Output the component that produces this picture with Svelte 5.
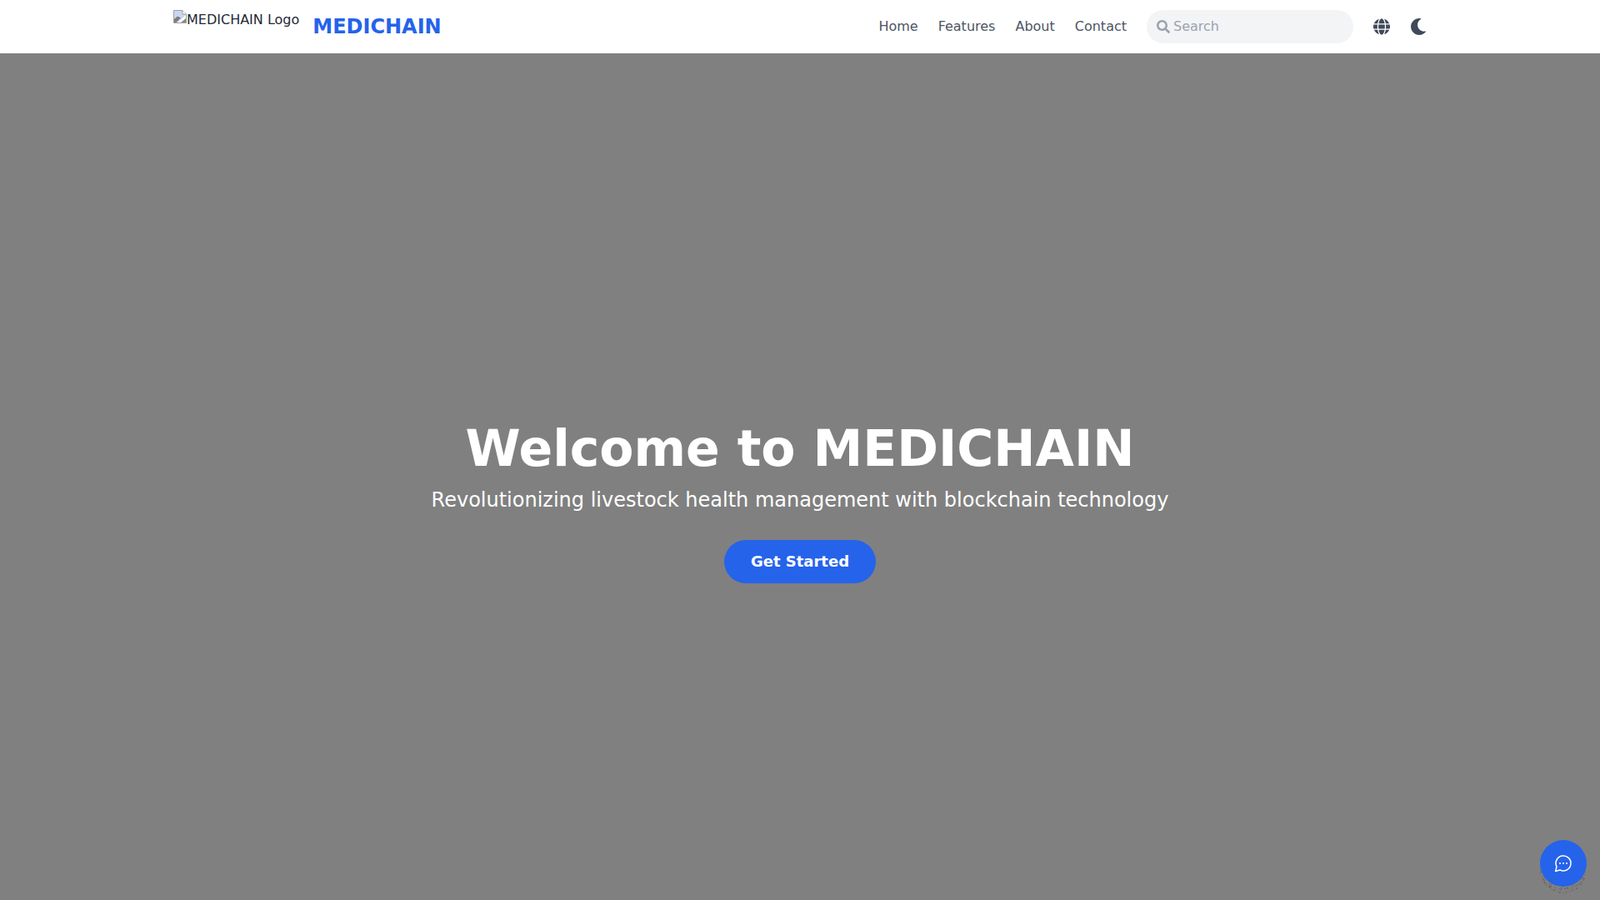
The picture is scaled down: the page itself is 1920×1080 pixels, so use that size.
<script>
  const links = ['Home', 'Features', 'About', 'Contact'];

  // scattered pixels of the chat button's shadow, the button itself hides the upper part
  const shadowDots = [];
  for (let y = 0; y < 36; y += 1) {
    for (let x = 0; x < 64; x += 1) {
      const noise = Math.abs(Math.sin(x * 12.9898 + y * 78.233) * 43758.5453) % 1;
      if (Math.hypot(x - 31, y - 4) < 28 && noise < 0.2) shadowDots.push({ x, y });
    }
  }
</script>

<div class="page">
  <header class="navbar">
    <div class="nav-inner">
      <a class="brand" href="#top">
        <span class="logo-alt">
          <svg class="broken" width="16" height="16" viewBox="0 0 16 16" aria-hidden="true">
            <path d="M0.5 0.5H11L15.5 5V15.5H0.5Z" fill="#c9d7f0" stroke="#a0a0a0" />
            <path d="M11 0.5V5H15.5" fill="#fff" stroke="#a0a0a0" />
            <path d="M1 15V11L5 7.5L9 9.5L3.5 15Z" fill="#7d7d7d" />
            <path d="M5 15L15 6V15Z" fill="#fff" />
            <path d="M9 15L15 10V15Z" fill="#8a8a8a" />
          </svg>MEDICHAIN Logo
        </span>
        <span class="brand-name">MEDICHAIN</span>
      </a>

      <nav class="nav-right">
        {#each links as link}
          <a class="nav-link" href="#top">{link}</a>
        {/each}
        <div class="search">
          <svg class="search-icon" width="16" height="16" viewBox="0 0 512 512" aria-hidden="true">
            <path fill="currentColor" d="M505 442.7L405.3 343c-4.5-4.5-10.6-7-17-7H372c27.6-35.3 44-79.7 44-128C416 93.1 322.9 0 208 0S0 93.1 0 208s93.1 208 208 208c48.3 0 92.7-16.4 128-44v16.3c0 6.4 2.5 12.5 7 17l99.7 99.7c9.4 9.4 24.6 9.4 33.9 0l28.3-28.3c9.4-9.4 9.4-24.6.1-34zM208 336c-70.7 0-128-57.2-128-128 0-70.7 57.2-128 128-128 70.7 0 128 57.2 128 128 0 70.7-57.2 128-128 128z" />
          </svg>
          <input class="search-input" type="text" placeholder="Search" />
        </div>
        <button class="icon-btn" aria-label="Language">
          <svg width="20" height="20" viewBox="0 0 20 20" aria-hidden="true">
            <defs>
              <pattern id="dither-globe" width="2" height="2" patternUnits="userSpaceOnUse">
                <rect width="2" height="2" fill="#374151" />
                <rect width="1" height="1" fill="#56606e" />
              </pattern>
            </defs>
            <path transform="scale(0.0403 0.0390625)" fill="url(#dither-globe)" d="M336.5 160C322 70.7 287.8 8 248 8s-74 62.7-88.5 152h177zM152 256c0 22.2 1.2 43.5 3.3 64h185.3c2.1-20.5 3.3-41.8 3.3-64s-1.2-43.5-3.3-64H155.3c-2.1 20.5-3.3 41.8-3.3 64zm324.7-96c-28.6-67.9-86.5-120.4-158-141.6 24.4 33.8 41.2 84.7 50 141.6h108zM177.2 18.4C105.8 39.6 47.8 92.1 19.3 160h108c8.7-56.9 25.5-107.8 49.9-141.6zM487.4 192H372.7c2.1 21 3.3 42.5 3.3 64s-1.2 43-3.3 64h114.6c5.5-20.5 8.6-41.8 8.6-64s-3.1-43.5-8.5-64zM120 256c0-21.5 1.2-43 3.3-64H8.6C3.2 212.5 0 233.8 0 256s3.2 43.5 8.6 64h114.6c-2-21-3.2-42.5-3.2-64zm39.5 96c14.5 89.3 48.7 152 88.5 152s74-62.7 88.5-152h-177zm159.3 141.6c71.4-21.2 129.4-73.7 158-141.6h-108c-8.8 56.9-25.6 107.8-50 141.6zM19.3 352c28.6 67.9 86.5 120.4 158 141.6-24.4-33.8-41.2-84.7-50-141.6h-108z" />
          </svg>
        </button>
        <button class="icon-btn" aria-label="Dark mode">
          <svg width="20" height="20" viewBox="0 0 20 20" aria-hidden="true">
            <defs>
              <pattern id="dither-moon" width="2" height="2" patternUnits="userSpaceOnUse">
                <rect width="2" height="2" fill="#374151" />
                <rect width="1" height="1" fill="#56606e" />
              </pattern>
            </defs>
            <path transform="scale(0.0390625)" fill="url(#dither-moon)" d="M283.211 512c78.962 0 151.079-35.925 198.857-94.792 7.068-8.708-.639-21.43-11.562-19.35-124.203 23.654-238.262-71.576-238.262-196.954 0-72.222 38.662-138.635 101.498-174.394 9.686-5.512 7.25-20.197-3.756-22.23A258.156 258.156 0 0 0 283.211 0c-141.309 0-256 114.511-256 256 0 141.309 114.511 256 256 256z" />
          </svg>
        </button>
      </nav>
    </div>
  </header>

  <main class="hero">
    <h1 class="hero-title">Welcome to MEDICHAIN</h1>
    <p class="hero-sub">Revolutionizing livestock health management with blockchain technology</p>
    <a class="cta" href="#top">Get Started</a>
  </main>

  <div class="chat-wrap">
    <svg class="chat-shadow" width="64" height="36" viewBox="0 0 64 36" aria-hidden="true">
      {#each shadowDots as dot}
        <rect x={dot.x} y={dot.y} width="1" height="1" fill="#666" />
      {/each}
    </svg>
    <button class="chat" aria-label="Open chat">
      <svg width="24" height="24" viewBox="0 0 24 24" fill="none" stroke="currentColor" stroke-width="1.5" stroke-linecap="round" stroke-linejoin="round" aria-hidden="true">
        <path d="M7.9 20A9 9 0 1 0 4 16.1L2.6 21.4Z" />
        <path d="M8 12h.01" stroke-width="2" />
        <path d="M12 12h.01" stroke-width="2" />
        <path d="M16 12h.01" stroke-width="2" />
      </svg>
    </button>
  </div>
</div>

<style>
  :global(body) {
    margin: 0;
    font-family: 'DejaVu Sans', sans-serif;
  }

  .page {
    height: 100vh;
    display: flex;
    flex-direction: column;
    color: #1f2937;
  }

  a {
    text-decoration: none;
  }

  .navbar {
    height: 64px;
    background: #fff;
  }

  .nav-inner {
    max-width: 1536px;
    height: 100%;
    margin: 0 auto;
    padding: 0 16px;
    box-sizing: border-box;
    display: flex;
    align-items: center;
    justify-content: space-between;
  }

  .brand {
    display: flex;
    align-items: center;
  }

  .logo-alt {
    height: 40px;
    margin-right: 16px;
    font-size: 16px;
    line-height: 19px;
    color: #1f2937;
  }

  .broken {
    vertical-align: 1px;
  }

  .brand-name {
    font-size: 24px;
    font-weight: 700;
    color: #2563eb;
  }

  .nav-right {
    display: flex;
    align-items: center;
    gap: 24px;
  }

  .nav-link {
    font-size: 16px;
    line-height: 24px;
    color: #4b5563;
    margin-top: -1px;
  }

  .search {
    position: relative;
    display: flex;
  }

  .search-icon {
    position: absolute;
    left: 12px;
    top: 12px;
    color: #9ca3af;
  }

  .search-input {
    width: 248px;
    height: 40px;
    box-sizing: border-box;
    padding: 0 16px 2px 32px;
    border: none;
    border-radius: 9999px;
    background: #f3f4f6;
    font-family: inherit;
    font-size: 16px;
    outline: none;
  }

  .search-input::placeholder {
    color: #9ca3af;
  }

  .icon-btn {
    padding: 0;
    border: none;
    background: none;
    display: flex;
  }

  .hero {
    flex: 1;
    padding-top: 64px;
    background: #808080;
    display: flex;
    flex-direction: column;
    align-items: center;
    justify-content: center;
    color: #fff;
  }

  .hero-title {
    margin: 0 0 16px;
    font-size: 60px;
    line-height: 60px;
    font-weight: 700;
  }

  .hero-sub {
    margin: 0 0 32px;
    font-size: 24px;
    line-height: 32px;
  }

  .cta {
    padding: 12px 32px;
    border-radius: 9999px;
    background: #2563eb;
    color: #fff;
    font-size: 18px;
    line-height: 28px;
    font-weight: 700;
  }

  .chat-wrap {
    position: fixed;
    right: 16px;
    bottom: 16px;
    width: 56px;
    height: 56px;
  }

  .chat-shadow {
    position: absolute;
    left: -4px;
    top: 32px;
  }

  .chat {
    position: relative;
    width: 56px;
    height: 56px;
    padding: 0;
    border: none;
    border-radius: 50%;
    background: #2563eb;
    color: #fff;
    display: flex;
    align-items: center;
    justify-content: center;
  }
</style>
